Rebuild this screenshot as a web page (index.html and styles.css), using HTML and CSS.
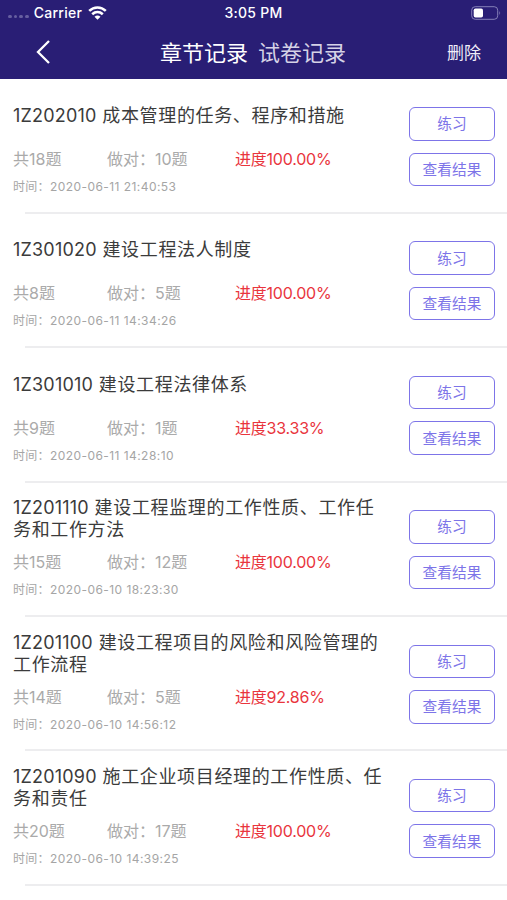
FILE: index.html
```
<!DOCTYPE html>
<html lang="zh-CN">
<head>
<meta charset="utf-8">
<title>章节记录</title>
<link rel="stylesheet" href="styles.css">
</head>
<body>
<header class="header">
  <div class="status">
    <div class="carrier">
      <span class="dots"><i></i><i></i><i></i><i></i></span>
      <span>Carrier</span>
      <svg class="wifi" width="19" height="14" viewBox="0 0 19 14" fill="none" stroke="#fff" stroke-width="2.6"><path d="M1.2 4.9C6 .3 13 .3 17.8 4.9M4.2 8.2C7.3 5.4 11.700 5.400 14.800 8.200"/><path d="M6.500 10.800Q9.500 8.400 12.500 10.800L9.500 13.800Z" fill="#fff" stroke="none"/></svg>
    </div>
    <span class="clock">3:05 PM</span>
    <svg class="battery" width="30" height="14" viewBox="0 0 30 14"><rect x=".7" y=".7" width="26" height="12.600" rx="3.500" fill="none" stroke="#8580b8"/><rect x="2.700" y="2.500" width="9.300" height="9" rx="1.800" fill="#fff"/><path d="M28.300 4.800Q30 7 28.300 9.200Z" fill="#8580b8"/></svg>
  </div>
  <nav class="nav">
    <svg class="back" width="16" height="26" viewBox="0 0 16 26" fill="none" stroke="#fff" stroke-width="2.300"><path d="M14 2L3 13L14 24"/></svg>
    <div class="tabs"><span class="tab active">章节记录</span><span class="tab">试卷记录</span></div>
    <span class="delete">删除</span>
  </nav>
</header>
<main class="list">
  <article class="row">
    <div class="info"><h2 class="title"><span class="code">1Z202010</span> 成本管理的任务、程序和措施</h2>
      <div class="meta"><span>共18题</span><span>做对：10题</span><span class="progress">进度100.00%</span></div>
      <div class="time">时间：<span>2020-06-11 21:40:53</span></div></div>
    <div class="actions"><button class="btn">练习</button><button class="btn">查看结果</button></div>
  </article>
  <article class="row">
    <div class="info"><h2 class="title"><span class="code">1Z301020</span> 建设工程法人制度</h2>
      <div class="meta"><span>共8题</span><span>做对：5题</span><span class="progress">进度100.00%</span></div>
      <div class="time">时间：<span>2020-06-11 14:34:26</span></div></div>
    <div class="actions"><button class="btn">练习</button><button class="btn">查看结果</button></div>
  </article>
  <article class="row">
    <div class="info"><h2 class="title"><span class="code">1Z301010</span> 建设工程法律体系</h2>
      <div class="meta"><span>共9题</span><span>做对：1题</span><span class="progress">进度33.33%</span></div>
      <div class="time">时间：<span>2020-06-11 14:28:10</span></div></div>
    <div class="actions"><button class="btn">练习</button><button class="btn">查看结果</button></div>
  </article>
  <article class="row">
    <div class="info"><h2 class="title"><span class="code">1Z201110</span> 建设工程监理的工作性质、工作任<br>务和工作方法</h2>
      <div class="meta"><span>共15题</span><span>做对：12题</span><span class="progress">进度100.00%</span></div>
      <div class="time">时间：<span>2020-06-10 18:23:30</span></div></div>
    <div class="actions"><button class="btn">练习</button><button class="btn">查看结果</button></div>
  </article>
  <article class="row">
    <div class="info"><h2 class="title"><span class="code">1Z201100</span> 建设工程项目的风险和风险管理的<br>工作流程</h2>
      <div class="meta"><span>共14题</span><span>做对：5题</span><span class="progress">进度92.86%</span></div>
      <div class="time">时间：<span>2020-06-10 14:56:12</span></div></div>
    <div class="actions"><button class="btn">练习</button><button class="btn">查看结果</button></div>
  </article>
  <article class="row">
    <div class="info"><h2 class="title"><span class="code">1Z201090</span> 施工企业项目经理的工作性质、任<br>务和责任</h2>
      <div class="meta"><span>共20题</span><span>做对：17题</span><span class="progress">进度100.00%</span></div>
      <div class="time">时间：<span>2020-06-10 14:39:25</span></div></div>
    <div class="actions"><button class="btn">练习</button><button class="btn">查看结果</button></div>
  </article>
</main>
</body>
</html>
```
FILE: styles.css
```
* { box-sizing: border-box; }
body {
  margin: 0;
  height: 900px;
  overflow: hidden;
  background: #fff;
  font-family: Inter, "Noto Sans CJK SC", sans-serif;
}
.header { height: 79px; background: #291e75; color: #fff; }
.status {
  height: 26px;
  padding: 0 6px 0 8px;
  display: grid;
  grid-template-columns: 1fr auto 1fr;
  align-items: center;
  font-size: 14px;
  line-height: 18px;
  font-weight: 500;
  letter-spacing: .25px;
}
.carrier { display: flex; align-items: center; margin-top: -1px; }
.clock { margin: -1px 1px 0 -1px; }
.dots { display: flex; gap: 2px; margin: 8px 5px 0 0; }
.dots i { width: 3.700px; height: 3.700px; border-radius: 50%; background: #665fa0; }
.wifi { margin-left: 6px; }
.battery { justify-self: end; }
.nav {
  height: 51px;
  padding: 0 26px 0 35px;
  display: grid;
  grid-template-columns: 1fr auto 1fr;
  align-items: center;
  font-family: "Noto Sans CJK SC", sans-serif;
}
.tabs { display: flex; gap: 10px; margin: -2px 10px 0 0; font-size: 22px; line-height: 30px; white-space: nowrap; }
.tab { color: #d5d2e6; }
.tab.active { color: #fff; }
.delete { justify-self: end; font-size: 17px; line-height: 24px; color: #efedf8; }
.list { padding-top: .5px; }
.row {
  height: 134.400px;
  padding-left: 13px;
  padding-right: 12px;
  display: flex;
  justify-content: space-between;
  background: linear-gradient(#ededef, #ededef) 25px 100% / 100% 2px no-repeat;
}
.info { width: 390px; padding-top: 14.500px; }
.title {
  margin: 0;
  height: 44px;
  display: flow-root;
  align-content: center;
  font-size: 18px;
  font-weight: 400;
  line-height: 22px;
  letter-spacing: .65px;
  color: #3b3b3b;
  white-space: nowrap;
}
.code { letter-spacing: .2px; }
.meta {
  display: grid;
  grid-template-columns: 94px 128px auto;
  margin-top: 9px;
  font-size: 16px;
  line-height: 24px;
  color: #aaa;
  white-space: nowrap;
}
.progress { color: #e9353d; letter-spacing: -.22px; }
.time { margin-top: 8px; font-size: 12px; line-height: 16px; letter-spacing: .3px; color: #a5a5a5; white-space: nowrap; }
.time span { letter-spacing: .44px; }
.actions { flex: none; width: 86px; padding-top: 27.500px; display: flex; flex-direction: column; gap: 12px; }
.btn {
  height: 33.500px;
  padding: 0 0 1px;
  border: 1.500px solid #7d74e8;
  border-radius: 6px;
  background: #fff;
  color: #7d74e8;
  font-family: "Noto Sans CJK SC", sans-serif;
  font-size: 14.700px;
  line-height: 20px;
}
```
